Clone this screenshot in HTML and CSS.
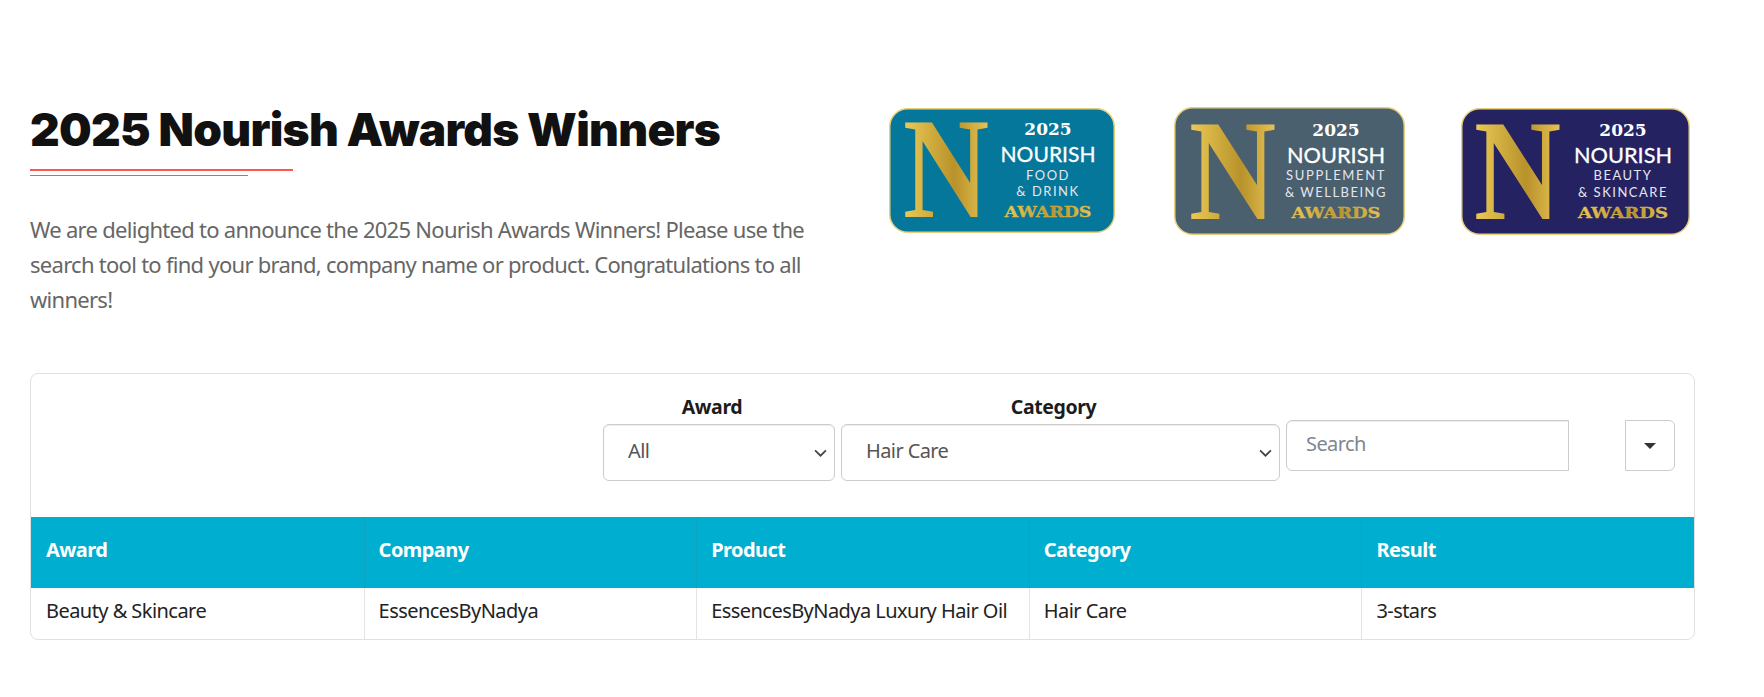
FILE: index.html
```html
<!DOCTYPE html>
<html lang="en">
<head>
    <meta charset="UTF-8">
    <meta name="viewport" content="width=device-width, initial-scale=1.0">
    <title>2025 Nourish Awards Winners</title>
    <link rel="stylesheet" href="styles.css">
</head>
<body>
    <svg class="defs" width="0" height="0" aria-hidden="true">
        <defs>
            <linearGradient id="gold" x1="0" y1="0" x2="1" y2="0">
                <stop offset="0" stop-color="#eccb57"/>
                <stop offset="0.6" stop-color="#b8922a"/>
                <stop offset="1" stop-color="#e8c455"/>
            </linearGradient>
        </defs>
    </svg>

    <div class="container">
        <div class="intro">
            <div class="intro-text">
                <h1>2025 Nourish Awards Winners</h1>
                <div class="rule rule-long"></div>
                <div class="rule rule-short"></div>
                <p>We are delighted to announce the 2025 Nourish Awards Winners! Please use the search tool to find your brand, company name or product. Congratulations to all winners!</p>
            </div>

            <div class="badges">
                <svg class="badge badge-food" viewBox="0 0 226 125">
                    <rect class="badge-bg" x="0.75" y="0.75" width="224.5" height="123.5" rx="18"/>
                    <text class="badge-n" x="14" y="109" textLength="86" lengthAdjust="spacingAndGlyphs">N</text>
                    <text class="badge-year" x="159" y="27">2025</text>
                    <text class="badge-name" x="159" y="54" textLength="95" lengthAdjust="spacingAndGlyphs">NOURISH</text>
                    <text class="badge-sub" x="159" y="72">FOOD</text>
                    <text class="badge-sub" x="159" y="88">&amp; DRINK</text>
                    <text class="badge-awards" x="159" y="109" textLength="87" lengthAdjust="spacingAndGlyphs">AWARDS</text>
                </svg>
                <svg class="badge badge-supplement" viewBox="0 0 231 128">
                    <rect class="badge-bg" x="0.75" y="0.75" width="229.5" height="126.5" rx="18"/>
                    <text class="badge-n" x="15" y="112" textLength="87" lengthAdjust="spacingAndGlyphs">N</text>
                    <text class="badge-year" x="162" y="29">2025</text>
                    <text class="badge-name" x="162" y="56" textLength="98" lengthAdjust="spacingAndGlyphs">NOURISH</text>
                    <text class="badge-sub" x="162" y="73" textLength="100">SUPPLEMENT</text>
                    <text class="badge-sub" x="162" y="90" textLength="102">&amp; WELLBEING</text>
                    <text class="badge-awards" x="162" y="111" textLength="89" lengthAdjust="spacingAndGlyphs">AWARDS</text>
                </svg>
                <svg class="badge badge-beauty" viewBox="0 0 229 127">
                    <rect class="badge-bg" x="0.75" y="0.75" width="227.5" height="125.5" rx="18"/>
                    <text class="badge-n" x="13" y="111" textLength="87" lengthAdjust="spacingAndGlyphs">N</text>
                    <text class="badge-year" x="162" y="28">2025</text>
                    <text class="badge-name" x="162" y="55" textLength="98" lengthAdjust="spacingAndGlyphs">NOURISH</text>
                    <text class="badge-sub" x="162" y="72">BEAUTY</text>
                    <text class="badge-sub" x="162" y="89" textLength="90">&amp; SKINCARE</text>
                    <text class="badge-awards" x="162" y="110" textLength="90" lengthAdjust="spacingAndGlyphs">AWARDS</text>
                </svg>
            </div>
        </div>

        <div class="results">
            <div class="toolbar">
                <div class="filter filter-award">
                    <label for="award">Award</label>
                    <select id="award">
                        <option>All</option>
                        <option>Beauty &amp; Skincare</option>
                        <option>Food &amp; Drink</option>
                    </select>
                </div>
                <div class="filter filter-category">
                    <label for="category">Category</label>
                    <select id="category">
                        <option>Hair Care</option>
                    </select>
                </div>
                <input class="search" type="text" placeholder="Search">
                <button class="columns-btn" type="button" aria-label="Columns"><span class="caret"></span></button>
            </div>

            <table>
                <thead>
                    <tr>
                        <th>Award</th>
                        <th>Company</th>
                        <th>Product</th>
                        <th>Category</th>
                        <th>Result</th>
                    </tr>
                </thead>
                <tbody>
                    <tr>
                        <td>Beauty &amp; Skincare</td>
                        <td>EssencesByNadya</td>
                        <td>EssencesByNadya Luxury Hair Oil</td>
                        <td>Hair Care</td>
                        <td>3-stars</td>
                    </tr>
                </tbody>
            </table>
        </div>
    </div>
</body>
</html>
```

FILE: styles.css
```css
body {
    margin: 0;
    background-color: #fff;
    font-family: "Noto Sans", "Open Sans", sans-serif;
    color: #222;
}

.defs {
    position: absolute;
}

.container {
    width: 1665px;
    margin-left: 30px;
    padding-top: 100px;
}

/* Heading and badges */
.intro {
    display: flex;
    justify-content: space-between;
    align-items: flex-start;
    height: 273px;
}

.intro-text {
    width: 790px;
}

h1 {
    margin: 0 0 11px;
    font-family: Inter, sans-serif;
    font-size: 46px;
    font-weight: 900;
    line-height: 58px;
    letter-spacing: -0.7px;
    color: #111;
}

.rule {
    background-color: #f55;
}

.rule-long {
    width: 263px;
    height: 2px;
}

.rule-short {
    width: 218px;
    height: 1px;
    margin-top: 4px;
}

p {
    margin: 36px 0 0;
    font-size: 22px;
    line-height: 35px;
    letter-spacing: -0.72px;
    color: #666;
}

.badges {
    display: flex;
    align-items: flex-start;
    gap: 56px;
    margin-top: 7px;
    margin-right: 5px;
}

.badge {
    display: block;
    overflow: visible;
}

.badge-food {
    width: 226px;
    height: 125px;
    margin-top: 1px;
    margin-right: 3px;
}

.badge-supplement {
    width: 231px;
    height: 128px;
}

.badge-beauty {
    width: 229px;
    height: 127px;
    margin-top: 1px;
}

.badge-bg {
    stroke: #e8cf7c;
    stroke-width: 1.5;
}

.badge-food .badge-bg { fill: #04779a; }
.badge-supplement .badge-bg { fill: #4a606e; }
.badge-beauty .badge-bg { fill: #252262; }

.badge-n {
    font-family: "Liberation Serif", serif;
    font-size: 144px;
    font-weight: 700;
    fill: url(#gold);
}

.badge-year,
.badge-name,
.badge-sub,
.badge-awards {
    text-anchor: middle;
}

.badge-year {
    font-family: "DejaVu Serif", serif;
    font-size: 17px;
    font-weight: 700;
    fill: #fff;
}

.badge-name {
    font-family: Lato, sans-serif;
    font-size: 22px;
    font-weight: 400;
    fill: #fff;
    stroke: #fff;
    stroke-width: 0.3;
}

.badge-sub {
    font-family: Lato, sans-serif;
    font-size: 13px;
    letter-spacing: 1.5px;
    fill: #e4e6ee;
}

.badge-awards {
    font-family: "DejaVu Serif", serif;
    font-size: 15px;
    font-weight: 700;
    fill: url(#gold);
    stroke: #d9b545;
    stroke-width: 0.3;
}

/* Table card */
.results {
    border: 1px solid #e0e0e0;
    border-radius: 8px;
    overflow: hidden;
}

.toolbar {
    display: flex;
    align-items: flex-start;
    height: 143px;
    padding-left: 572px;
}

.filter {
    display: flex;
    flex-direction: column;
    margin-top: 18px;
}

.filter label {
    height: 32px;
    padding-right: 14px;
    font-size: 19.5px;
    font-weight: 700;
    line-height: 30px;
    letter-spacing: -0.4px;
    text-align: center;
    color: #1c1c1c;
}

.filter-award {
    width: 232px;
    margin-right: 6px;
}

.filter-category {
    width: 439px;
    margin-right: 6px;
}

select {
    height: 57px;
    padding: 0 24px 5px;
    border: 1px solid #ccc;
    border-radius: 6px;
    appearance: none;
    background-color: #fff;
    background-image: url("data:image/svg+xml,%3Csvg xmlns='http://www.w3.org/2000/svg' viewBox='0 0 12 7'%3E%3Cpath d='M1 1l5 5 5-5' fill='none' stroke='%23444' stroke-width='1.6'/%3E%3C/svg%3E");
    background-repeat: no-repeat;
    background-position: right 7px center;
    background-size: 13px 8px;
    font-family: inherit;
    font-size: 20px;
    letter-spacing: -0.6px;
    color: #555;
    box-shadow: inset 0 1px 1px rgba(0, 0, 0, 0.075);
}

.search {
    box-sizing: border-box;
    width: 283px;
    height: 51px;
    margin-top: 46px;
    padding: 0 19px 5px;
    border: 1px solid #ccc;
    border-radius: 6px 0 0 6px;
    font-family: inherit;
    font-size: 20px;
    letter-spacing: -0.6px;
    box-shadow: inset 0 1px 1px rgba(0, 0, 0, 0.075);
}

.search::placeholder {
    color: #7c8791;
}

.columns-btn {
    width: 50px;
    height: 51px;
    margin-top: 46px;
    margin-left: 56px;
    padding: 0;
    border: 1px solid #ccc;
    border-radius: 0 6px 6px 0;
    background-color: #fff;
}

.caret {
    display: inline-block;
    border-top: 6px solid #333;
    border-left: 6px solid transparent;
    border-right: 6px solid transparent;
    vertical-align: middle;
}

/* Table */
table {
    width: 100%;
    table-layout: fixed;
    border-collapse: separate;
    border-spacing: 0;
}

th,
td {
    padding: 0 15px 7px 14px;
    text-align: left;
    font-size: 20px;
    letter-spacing: -0.55px;
    border-left: 1px solid #e4e4e4;
}

th:first-child,
td:first-child {
    padding-left: 15px;
    border-left: none;
}

th {
    height: 64px;
    background-color: #00aecf;
    border-left-color: #0da2bf;
    font-weight: 700;
    color: #fff;
}

td {
    height: 44px;
    color: #222;
}
```
